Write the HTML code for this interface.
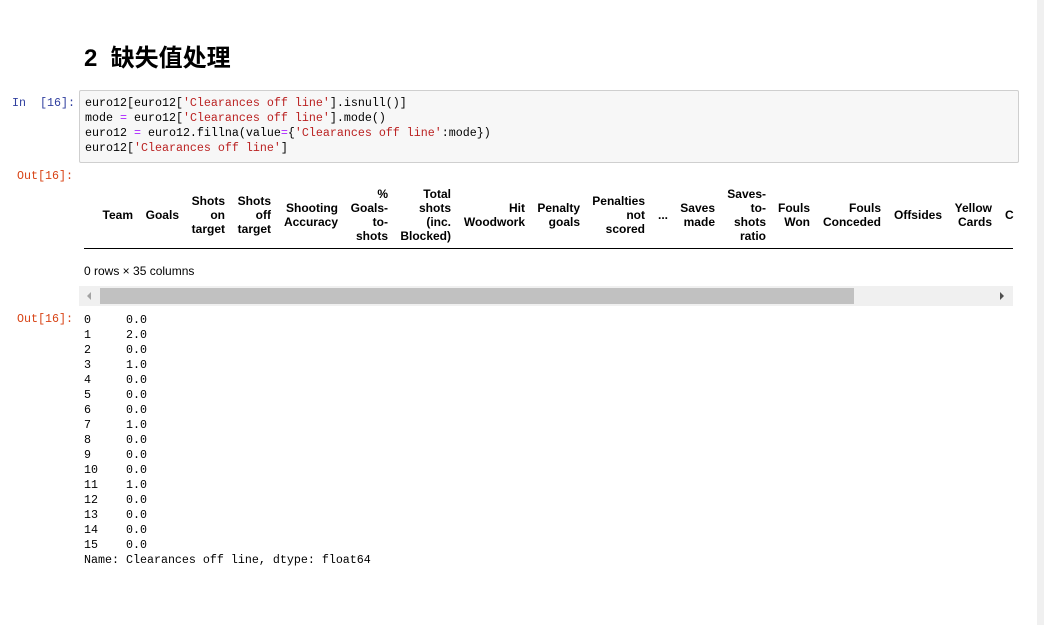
<!DOCTYPE html>
<html><head><meta charset="utf-8"><style>
body{margin:0;width:1044px;height:625px;background:#fff;position:relative;overflow:hidden;font-family:"Liberation Sans",Arial,sans-serif}
.a{position:absolute;white-space:pre}
.m{font-family:"Liberation Mono","Noto Sans CJK SC",monospace;font-size:11.67px;line-height:15px;color:#000}
.h{position:absolute;font-weight:bold;font-size:12px;line-height:14px;text-align:right;white-space:pre;color:#000}
.r{color:#ba2121}.p{color:#aa22ff}
</style></head><body>
<div class="a" style="left:84px;top:44px;font-size:24px;font-weight:bold;font-family:'Liberation Sans','Noto Sans CJK SC',sans-serif;line-height:30px">2  缺失值处理</div>
<div class="a m" style="left:12px;top:96px;color:#303f9f">In  [16]:</div>
<div style="position:absolute;left:79px;top:90px;width:938px;height:71px;background:#f7f7f7;border:1px solid #cfcfcf;border-radius:2px"></div>
<div class="a m" style="left:85px;top:96px">euro12[euro12[<span class="r">'Clearances off line'</span>].isnull()]
mode <span class="p">=</span> euro12[<span class="r">'Clearances off line'</span>].mode()
euro12 <span class="p">=</span> euro12.fillna(value<span class="p">=</span>{<span class="r">'Clearances off line'</span>:mode})
euro12[<span class="r">'Clearances off line'</span>]</div>
<div class="a m" style="left:17px;top:169px;color:#d84315">Out[16]:</div>
<div class="h" style="right:911px;top:208px">Team</div>
<div class="h" style="right:865px;top:208px">Goals</div>
<div class="h" style="right:819px;top:194px">Shots
on
target</div>
<div class="h" style="right:773px;top:194px">Shots
off
target</div>
<div class="h" style="right:706px;top:201px">Shooting
Accuracy</div>
<div class="h" style="right:656px;top:187px">%
Goals-
to-
shots</div>
<div class="h" style="right:593px;top:187px">Total
shots
(inc.
Blocked)</div>
<div class="h" style="right:519px;top:201px">Hit
Woodwork</div>
<div class="h" style="right:464px;top:201px">Penalty
goals</div>
<div class="h" style="right:399px;top:194px">Penalties
not
scored</div>
<div class="h" style="right:376px;top:208px">...</div>
<div class="h" style="right:329px;top:201px">Saves
made</div>
<div class="h" style="right:278px;top:187px">Saves-
to-
shots
ratio</div>
<div class="h" style="right:234px;top:201px">Fouls
Won</div>
<div class="h" style="right:163px;top:201px">Fouls
Conceded</div>
<div class="h" style="right:102px;top:208px">Offsides</div>
<div class="h" style="right:52px;top:201px">Yellow
Cards</div>
<div class="h" style="left:1005px;top:208px">C</div>
<div style="position:absolute;left:84px;top:248px;width:929px;height:1px;background:#000"></div>
<div class="a" style="left:84px;top:264px;font-size:12px">0 rows × 35 columns</div>
<div style="position:absolute;left:79px;top:286px;width:934px;height:20px;background:#f0f0f0"></div>
<div style="position:absolute;left:100px;top:288px;width:754px;height:16px;background:#c1c1c1"></div>
<div style="position:absolute;left:87px;top:292px;width:0;height:0;border-top:4px solid transparent;border-bottom:4px solid transparent;border-right:4px solid #a3a3a3"></div>
<div style="position:absolute;left:1000px;top:292px;width:0;height:0;border-top:4px solid transparent;border-bottom:4px solid transparent;border-left:4px solid #505050"></div>
<div class="a m" style="left:17px;top:312px;color:#d84315">Out[16]:</div>
<div class="a m" style="left:84px;top:313px">0     0.0
1     2.0
2     0.0
3     1.0
4     0.0
5     0.0
6     0.0
7     1.0
8     0.0
9     0.0
10    0.0
11    1.0
12    0.0
13    0.0
14    0.0
15    0.0
Name: Clearances off line, dtype: float64</div>
<div style="position:absolute;left:1037px;top:0;width:7px;height:625px;background:#f0f0f0"></div>
</body></html>
